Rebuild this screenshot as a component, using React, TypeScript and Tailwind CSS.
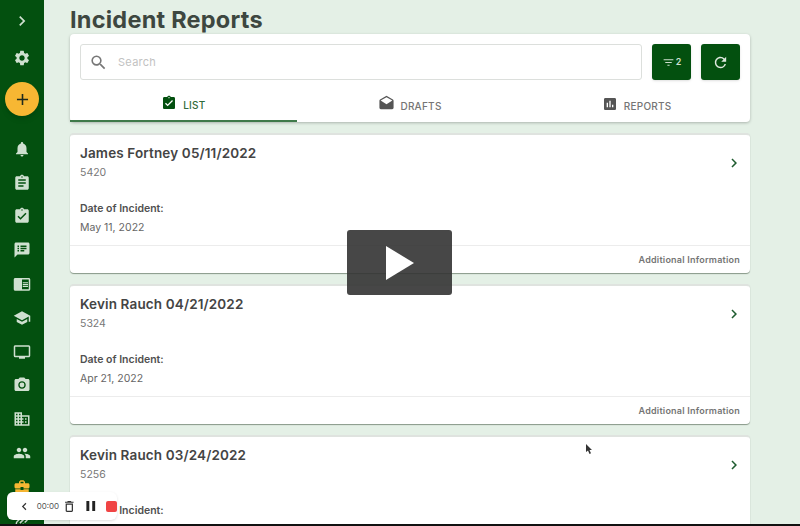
import {
  MdAdd,
  MdAssignment,
  MdAssignmentTurnedIn,
  MdBusinessCenter,
  MdCameraAlt,
  MdChevronLeft,
  MdChevronRight,
  MdChromeReaderMode,
  MdDeleteOutline,
  MdDomain,
  MdDrafts,
  MdFilterList,
  MdInsertChart,
  MdLink,
  MdNotifications,
  MdPause,
  MdPeople,
  MdPersonalVideo,
  MdRefresh,
  MdSchool,
  MdSearch,
  MdSettings,
  MdSpeakerNotes,
} from "react-icons/md";

const navTop = [MdNotifications, MdAssignment, MdAssignmentTurnedIn, MdSpeakerNotes, MdChromeReaderMode, MdSchool, MdPersonalVideo, MdCameraAlt, MdDomain, MdPeople];

const reports = [
  { title: "James Fortney 05/11/2022", id: "5420", date: "May 11, 2022" },
  { title: "Kevin Rauch 04/21/2022", id: "5324", date: "Apr 21, 2022" },
  { title: "Kevin Rauch 03/24/2022", id: "5256", date: "Mar 24, 2022" },
];

const Sidebar = () => (
  <div className="flex h-full w-11 shrink-0 flex-col items-center overflow-hidden bg-[#03500f] text-[#cfe0d0]">
    <div className="mt-[11px] flex h-5 items-center justify-center">
      <MdChevronRight size={20} />
    </div>
    <div className="mt-[18px] flex h-5 items-center justify-center">
      <MdSettings size={18} />
    </div>
    <button className="mt-[15px] flex h-[34px] w-[34px] shrink-0 items-center justify-center rounded-full bg-[#f7b733] text-[#1f2a1c] shadow-md">
      <MdAdd size={19} />
    </button>
    <div className="mt-[16px] flex flex-col">
      {navTop.map((Icon, i) => (
        <div key={i} className="flex h-[33.8px] items-center justify-center">
          <Icon size={18} />
        </div>
      ))}
      <div className="flex h-[33.8px] items-center justify-center text-[#f7b733]">
        <MdBusinessCenter size={18} />
      </div>
      <div className="flex h-[33.8px] items-center justify-center">
        <MdLink size={18} className="-rotate-45" />
      </div>
    </div>
  </div>
);

const Toolbar = () => (
  <div className="rounded-sm bg-white shadow-[0_1px_3px_rgba(0,0,0,0.25)]">
    <div className="flex gap-[10px] px-[10px] pt-[10px]">
      <div className="flex h-[36px] flex-1 items-center rounded-[3px] border border-[#dcdfdc] pl-2">
        <MdSearch size={19} className="text-[#777]" />
        <span className="ml-[10px] text-[11px] tracking-wide text-[#c2c2c2]">Search</span>
      </div>
      <button className="flex h-[36px] w-[39px] items-center justify-center rounded-[3px] bg-[#03500f] text-[#cfe0d0] shadow-sm">
        <MdFilterList size={13} />
        <span className="ml-[1px] text-[9px] font-semibold">2</span>
      </button>
      <button className="flex h-[36px] w-[39px] items-center justify-center rounded-[3px] bg-[#03500f] text-[#dfe9df] shadow-sm">
        <MdRefresh size={17} />
      </button>
    </div>
    <div className="mt-[11px] flex h-[31px] text-[10px] font-medium tracking-wide">
      <div className="flex flex-1 items-center justify-center gap-[6px] border-b-2 border-[#3f7a4a] pb-[2px] text-[#2f6b3b]">
        <MdAssignmentTurnedIn size={16} className="-mt-1 text-[#03500f]" />
        <span className="mt-[2px]">LIST</span>
      </div>
      <div className="flex flex-1 items-center justify-center gap-[5px] pb-[2px] text-[#757575]">
        <MdDrafts size={17} className="-mt-1 text-[#555]" />
        <span className="mt-[2px]">DRAFTS</span>
      </div>
      <div className="flex flex-1 items-center justify-center gap-[6px] pb-[2px] text-[#757575]">
        <MdInsertChart size={16} className="-mt-1 text-[#555]" />
        <span className="mt-[2px]">REPORTS</span>
      </div>
    </div>
  </div>
);

const ReportCard = ({ title, id, date }: { title: string; id: string; date: string }) => (
  <div className="mt-[11px] h-[140px] shrink-0 rounded-sm border-t-2 border-[#dfe3df] bg-white shadow-[0_1px_1px_rgba(60,80,60,0.55)]">
    <div className="relative h-[111px] border-b border-[#ececec] px-[10px] pt-[9px]">
      <h2 className="text-[13.5px] leading-[18px] font-semibold tracking-[0.01em] text-[#444]">{title}</h2>
      <p className="mt-[3px] text-[10.5px] leading-[16px] text-[#777]">{id}</p>
      <p className="mt-[20px] text-[10.5px] leading-[16px] font-semibold text-[#505050]">Date of Incident:</p>
      <p className="mt-[3px] text-[10.5px] leading-[16px] text-[#666]">{date}</p>
      <MdChevronRight size={18} className="absolute top-[19px] right-[7px] text-[#1f5c30]" />
    </div>
    <div className="flex h-[27px] items-center justify-end px-[10px] text-[9px] font-semibold tracking-wide text-[#757575]">
      Additional Information
    </div>
  </div>
);

const Recorder = () => (
  <div className="absolute top-[492px] left-[7px] flex h-[28px] w-[110px] items-center rounded-md bg-white pl-[10px] text-[#333] shadow-sm">
    <MdChevronLeft size={15} />
    <span className="ml-[5px] text-[8px] text-[#555]">00:00</span>
    <MdDeleteOutline size={15} className="ml-[3px]" />
    <MdPause size={18} className="ml-[5px] text-[#222]" />
    <span className="ml-[7px] h-[11px] w-[11px] rounded-[2px] bg-[#f04444]" />
  </div>
);

const App = () => {
  return (
    <div className="relative flex h-[526px] w-[800px] overflow-hidden bg-[#e4f0e6] font-['Inter','Liberation_Sans',sans-serif]">
      <Sidebar />
      <main className="flex min-w-0 flex-1 flex-col overflow-hidden pr-[50px] pl-[26px]">
        <h1 className="mt-[6px] h-[37px] text-[23.5px] leading-[28px] font-bold tracking-[0.01em] text-[#3d4740]">Incident Reports</h1>
        <Toolbar />
        <div className="flex flex-col">
          {reports.map((r) => (
            <ReportCard key={r.id} {...r} />
          ))}
        </div>
      </main>

      {/* video player overlay */}
      <div className="absolute top-[230px] left-[347px] flex h-[65px] w-[105px] items-center justify-center rounded-[3px] bg-[#333]/90">
        <svg width="28" height="34" viewBox="0 0 28 34">
          <path d="M0 0 L28 17 L0 34 Z" fill="#fff" />
        </svg>
      </div>
      <Recorder />
      <svg className="absolute top-[444px] left-[585px]" width="8" height="11" viewBox="0 0 8 11">
        <path d="M1 0 L1 8 L3 6.5 L4.5 10 L6 9.3 L4.5 6 L7 6 Z" fill="#333" />
      </svg>
      <div className="absolute bottom-0 left-0 h-[2px] w-full bg-[#111]" />
    </div>
  );
};

export default App;
